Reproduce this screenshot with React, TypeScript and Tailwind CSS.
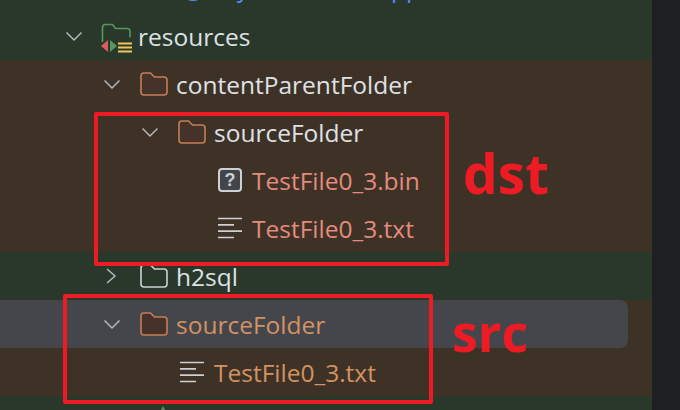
const FONT = 'font-["Open_Sans",sans-serif]';

function Chevron({ open }: { open: boolean }) {
  return (
    <svg width="16" height="16" viewBox="0 0 16 16" fill="none" className="flex-none">
      <path
        d={open ? 'M0.5 4.500l7.500 7.500 7.500-7.500' : 'M3 1l8 7-8 7'}
        stroke="#b4b8bf"
        strokeWidth="1.5"
      />
    </svg>
  );
}

function Folder({ stroke, fill }: { stroke: string; fill: string }) {
  return (
    <svg width="28" height="24" viewBox="0 0 28 24" fill="none" className="flex-none">
      <path
        d="M1 4a3 3 0 0 1 3-3h6.500l4 4H24a3 3 0 0 1 3 3v12a3 3 0 0 1-3 3H4a3 3 0 0 1-3-3z"
        fill={fill}
        stroke={stroke}
        strokeWidth="1.600"
      />
    </svg>
  );
}

function ResourcesIcon() {
  return (
    <svg width="32" height="34" viewBox="0 0 32 34" fill="none" className="flex-none">
      <path
        d="M1.500 23V8.500a3 3 0 0 1 3-3h7l3 4H26a3 3 0 0 1 3 3v6"
        stroke="#57965c"
        strokeWidth="1.600"
      />
      <path d="M7 21v12l-7-6z" fill="#db5c5c" />
      <path d="M9 21v12l7-6z" fill="#57965c" />
      <path d="M17 24.500h14M17 28.500h14M17 32.500h14" stroke="#f2c55c" strokeWidth="2" />
    </svg>
  );
}

function TextIcon() {
  return (
    <svg width="24" height="22" viewBox="0 0 24 22" fill="none" className="flex-none">
      <path d="M0 1.500h24M0 7.800h16M0 14.200h24M0 20.500h16" stroke="#ced0d6" strokeWidth="1.700" />
    </svg>
  );
}

function UnknownIcon() {
  return (
    <div className="flex h-6 w-6 flex-none items-center justify-center rounded-[4px] border-2 border-[#ced0d6] bg-[#43454a] font-['Liberation_Sans',sans-serif] text-[18px] leading-none font-bold text-[#ced0d6]">
      ?
    </div>
  );
}

type Row = {
  pad: string;
  bg: string;
  chevron?: boolean;
  icon: React.ReactNode;
  iconGap: string;
  textGap: string;
  label: string;
  color: string;
};

const BROWN = 'bg-[#3e3227]';
const GREEN = 'bg-[#29382b]';
const ORANGE_FOLDER = <Folder stroke="#c67d56" fill="#45322a" />;

const ROWS: Row[] = [
  {
    pad: 'pl-[66px]',
    bg: GREEN,
    chevron: true,
    icon: <ResourcesIcon />,
    iconGap: 'ml-[19px]',
    textGap: 'ml-[5px]',
    label: 'resources',
    color: 'text-[#dfe1e5]',
  },
  {
    pad: 'pl-[104px]',
    bg: BROWN,
    chevron: true,
    icon: ORANGE_FOLDER,
    iconGap: 'ml-[20px]',
    textGap: 'ml-[8px]',
    label: 'contentParentFolder',
    color: 'text-[#dfe1e5]',
  },
  {
    pad: 'pl-[142px]',
    bg: BROWN,
    chevron: true,
    icon: ORANGE_FOLDER,
    iconGap: 'ml-[20px]',
    textGap: 'ml-[8px]',
    label: 'sourceFolder',
    color: 'text-[#dfe1e5]',
  },
  {
    pad: 'pl-[218px]',
    bg: BROWN,
    icon: <UnknownIcon />,
    iconGap: '',
    textGap: 'ml-[10px]',
    label: 'TestFile0_3.bin',
    color: 'text-[#e58a7d]',
  },
  {
    pad: 'pl-[218px]',
    bg: BROWN,
    icon: <TextIcon />,
    iconGap: '',
    textGap: 'ml-[10px]',
    label: 'TestFile0_3.txt',
    color: 'text-[#e58a7d]',
  },
  {
    pad: 'pl-[104px]',
    bg: GREEN,
    chevron: false,
    icon: <Folder stroke="#ced0d6" fill="#29382b" />,
    iconGap: 'ml-[20px]',
    textGap: 'ml-[8px]',
    label: 'h2sql',
    color: 'text-[#dfe1e5]',
  },
];

function TreeRow({ row }: { row: Row }) {
  return (
    <div className={`flex h-12 items-center ${row.pad} ${row.bg}`}>
      {row.chevron !== undefined && <Chevron open={row.chevron} />}
      <div className={row.iconGap}>{row.icon}</div>
      <span className={`${row.textGap} mt-[2px] text-[24.5px] leading-none ${row.color}`}>{row.label}</span>
    </div>
  );
}

export default function App() {
  return (
    <div className={`relative flex h-[410px] w-[680px] overflow-hidden bg-[#1e1f22] ${FONT}`}>
      <div className="w-[652px] flex-none">
        {/* clipped row above the fold */}
        <div className={`-mt-[36px] flex h-12 items-center pl-[180px] ${GREEN}`}>
          <span className="h-[26px] w-[26px] flex-none rounded-full border-2 border-[#548af7]" />
          <span className="ml-[8px] text-[24.5px] leading-none text-[#548af7]">
            my.test.demo.app
          </span>
        </div>

        {ROWS.map((row) => (
          <TreeRow key={`${row.label}-${row.pad}`} row={row} />
        ))}

        <div className={BROWN}>
          <div className="mr-[24px] flex h-12 items-center rounded-r-[8px] bg-[#45464c] pl-[104px]">
            <Chevron open />
            <div className="ml-[20px]">{ORANGE_FOLDER}</div>
            <span className="mt-[2px] ml-[8px] text-[24.5px] leading-none text-[#d39262]">sourceFolder</span>
          </div>
          <div className="flex h-12 items-center pl-[180px]">
            <TextIcon />
            <span className="mt-[2px] ml-[10px] text-[24.5px] leading-none text-[#d39262]">TestFile0_3.txt</span>
          </div>
        </div>
        <div className={`h-12 pt-[10px] pl-[157px] ${GREEN}`}>
          <svg width="12" height="12" viewBox="0 0 12 12" className="block">
            <path d="M6 0l6 12H0z" fill="#57965c" />
          </svg>
        </div>
      </div>

      {/* red annotations drawn over the screenshot */}
      <div className="absolute top-[112px] left-[94px] h-[154px] w-[355px] rounded-[2px] border-4 border-[#ed1c24]" />
      <div className="absolute top-[294px] left-[63px] h-[110px] w-[370px] rounded-[2px] border-4 border-[#ed1c24]" />
      <span className="absolute top-[145px] left-[463px] text-[55px] leading-none font-bold text-[#ed1c24]">dst</span>
      <span className="absolute top-[306px] left-[452px] text-[52px] leading-none font-bold text-[#ed1c24]">src</span>
    </div>
  );
}
